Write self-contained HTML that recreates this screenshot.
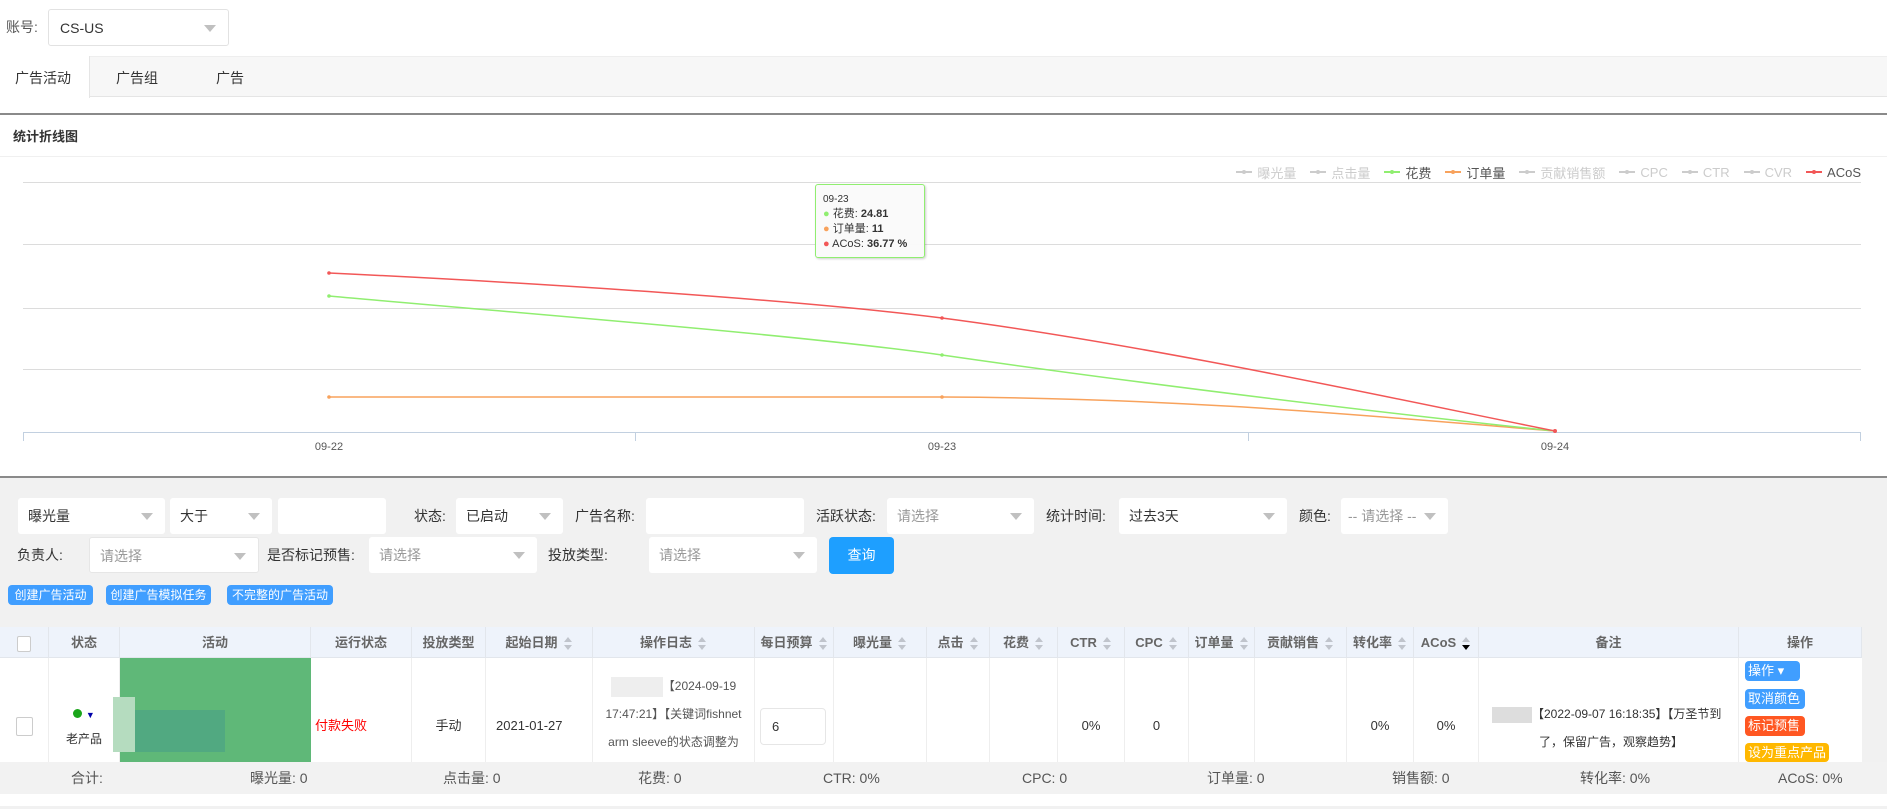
<!DOCTYPE html>
<html><head><meta charset="utf-8">
<style>
*{box-sizing:border-box;margin:0;padding:0}
body{width:1887px;height:809px;overflow:hidden;background:#fff;font-family:"Liberation Sans","Noto Sans CJK SC",sans-serif;color:#333;position:relative;font-size:14px}
.a{position:absolute}
.sel{position:absolute;background:#fff;border-radius:3px;height:36px;line-height:36px;padding-left:10px;font-size:14px;color:#333}
.sel.ph{color:#999}
.sel:after{content:"";position:absolute;right:12px;top:15px;border-left:6px solid transparent;border-right:6px solid transparent;border-top:7px solid #c0c0c0}
.lbl{position:absolute;font-size:14px;color:#333;line-height:36px}
.bb{position:absolute;background:#409eff;color:#fff;font-size:12px;border-radius:4px;height:20px;line-height:20px;text-align:center}
.th{position:absolute;top:627px;height:31px;line-height:31px;text-align:center;font-size:13px;color:#666;border-right:1px solid #e2e6ec;font-weight:bold}
.td{position:absolute;top:658px;height:136px;border-right:1px solid #eee;font-size:13px;color:#333;text-align:center;line-height:136px}
.sort{display:inline-block;width:9px;height:14px;vertical-align:middle;margin-left:6px;position:relative}
.sort:before{content:"";position:absolute;left:0;top:0;border-left:4.5px solid transparent;border-right:4.5px solid transparent;border-bottom:5px solid #c0c4cc}
.sort:after{content:"";position:absolute;left:0;top:8px;border-left:4.5px solid transparent;border-right:4.5px solid transparent;border-top:5px solid #c0c4cc}
.sort.d:after{border-top-color:#000}
.ft{position:absolute;top:762px;height:32px;line-height:32px;font-size:14px;color:#555}
.ob{position:absolute;left:1745px;color:#fff;font-size:13px;border-radius:4px;height:20px;line-height:20px;padding:0 3px}
.leg{display:inline-flex;align-items:center;margin-left:14px;font-size:13px;color:#ccc}
.leg i{display:inline-block;width:16px;height:2px;background:#ccc;margin-right:5px;position:relative}
.leg i:after{content:"";position:absolute;left:6px;top:-1.5px;width:4px;height:4px;border-radius:50%;background:inherit}
</style></head><body>
<div class="lbl" style="left:6px;top:9px;color:#555">账号:</div>
<div class="sel" style="left:48px;top:9px;width:181px;height:37px;border:1px solid #e2e2e2;padding-left:11px">CS-US</div>
<div class="a" style="left:0;top:56px;width:1887px;height:41px;background:#f7f7f7;border-top:1px solid #eee;border-bottom:1px solid #e5e5e5"></div>
<div class="a" style="left:0;top:56px;width:90px;height:42px;background:#fff;border-right:1px solid #e5e5e5"></div>
<div class="a" style="left:15px;top:68px;font-size:14px;color:#333">广告活动</div>
<div class="a" style="left:116px;top:68px;font-size:14px;color:#333">广告组</div>
<div class="a" style="left:216px;top:68px;font-size:14px;color:#333">广告</div>
<div class="a" style="left:0;top:113px;width:1887px;height:2px;background:#8a8a8a"></div>
<div class="a" style="left:13px;top:126px;font-size:13px;font-weight:bold;color:#333">统计折线图</div>
<div class="a" style="left:0;top:156px;width:1887px;height:1px;background:#f0f0f0"></div>
<svg class="a" style="left:0;top:157px" width="1887" height="318">
<g stroke="#dcdcdc" stroke-width="1">
<line x1="23" y1="25.5" x2="1861" y2="25.5"/>
<line x1="23" y1="87.5" x2="1861" y2="87.5"/>
<line x1="23" y1="151.5" x2="1861" y2="151.5"/>
<line x1="23" y1="212.5" x2="1861" y2="212.5"/>
</g>
<g stroke="#c2d0e0" stroke-width="1">
<line x1="23" y1="275.5" x2="1861" y2="275.5"/>
<line x1="23.5" y1="275" x2="23.5" y2="284"/>
<line x1="635.5" y1="275" x2="635.5" y2="284"/>
<line x1="1248.5" y1="275" x2="1248.5" y2="284"/>
<line x1="1860.5" y1="275" x2="1860.5" y2="284"/>
</g>
<g font-size="11" fill="#555" text-anchor="middle" font-family="Liberation Sans">
<text x="329" y="293">09-22</text><text x="942" y="293">09-23</text><text x="1555" y="293">09-24</text>
</g>
<g fill="none" stroke-width="1.5">
<path d="M329 240 L942 240 C1200 241 1400 262 1555 274" stroke="#f8a25c"/>
<path d="M329 139 C540 158 800 178 942 198 C1150 228 1400 258 1555 274" stroke="#90ee70"/>
<path d="M329 116 C540 126 800 143 942 161 C1150 188 1400 243 1555 274" stroke="#f25757"/>
</g>
<g><circle cx="329" cy="240" r="1.8" fill="#f8a25c"/><circle cx="942" cy="240" r="1.8" fill="#f8a25c"/>
<circle cx="329" cy="139" r="1.8" fill="#90ee70"/><circle cx="942" cy="198" r="1.8" fill="#90ee70"/>
<circle cx="329" cy="116" r="1.8" fill="#f25757"/><circle cx="942" cy="161" r="1.8" fill="#f25757"/><circle cx="1555" cy="274" r="2" fill="#f25757"/></g>
</svg>
<div class="a" style="right:26px;top:164px;height:16px;display:flex">
<span class="leg"><i></i>曝光量</span><span class="leg"><i></i>点击量</span>
<span class="leg" style="color:#555"><i style="background:#90ee70"></i>花费</span>
<span class="leg" style="color:#555"><i style="background:#f8a25c"></i>订单量</span>
<span class="leg"><i></i>贡献销售额</span><span class="leg"><i></i>CPC</span><span class="leg"><i></i>CTR</span><span class="leg"><i></i>CVR</span>
<span class="leg" style="color:#555"><i style="background:#f25757"></i>ACoS</span>
</div>
<div class="a" style="left:815px;top:184px;width:110px;height:74px;background:rgba(250,250,250,.95);border:1px solid #90ee70;border-radius:3px;box-shadow:1px 1px 2px rgba(0,0,0,.2);font-size:11px;color:#333;padding:7px 7px;line-height:15px">
<div style="font-size:10px">09-23</div>
<div><span style="color:#90ee70">●</span> 花费: <b>24.81</b></div>
<div><span style="color:#f8a25c">●</span> 订单量: <b>11</b></div>
<div><span style="color:#f25757">●</span> ACoS: <b>36.77 %</b></div>
</div>
<div class="a" style="left:0;top:476px;width:1887px;height:2px;background:#8a8a8a"></div>
<div class="a" style="left:0;top:478px;width:1887px;height:331px;background:#f1f1f1"></div>
<div class="sel" style="left:18px;top:498px;width:147px">曝光量</div>
<div class="sel" style="left:170px;top:498px;width:102px">大于</div>
<div class="a" style="left:278px;top:498px;width:108px;height:36px;background:#fff;border-radius:3px"></div>
<div class="lbl" style="left:414px;top:498px">状态:</div>
<div class="sel" style="left:456px;top:498px;width:107px">已启动</div>
<div class="lbl" style="left:575px;top:498px">广告名称:</div>
<div class="a" style="left:646px;top:498px;width:158px;height:36px;background:#fff;border-radius:3px"></div>
<div class="lbl" style="left:816px;top:498px">活跃状态:</div>
<div class="sel ph" style="left:887px;top:498px;width:147px">请选择</div>
<div class="lbl" style="left:1046px;top:498px">统计时间:</div>
<div class="sel" style="left:1119px;top:498px;width:168px">过去3天</div>
<div class="lbl" style="left:1299px;top:498px">颜色:</div>
<div class="sel ph" style="left:1341px;top:498px;width:107px;padding-left:7px">-- 请选择 --</div>
<div class="lbl" style="left:17px;top:537px">负责人:</div>
<div class="sel ph" style="left:89px;top:537px;width:170px;border:1px solid #e6e6e6">请选择</div>
<div class="lbl" style="left:267px;top:537px">是否标记预售:</div>
<div class="sel ph" style="left:369px;top:537px;width:168px">请选择</div>
<div class="lbl" style="left:548px;top:537px">投放类型:</div>
<div class="sel ph" style="left:649px;top:537px;width:168px">请选择</div>
<div class="a" style="left:829px;top:537px;width:65px;height:37px;background:#1e9fff;border-radius:4px;color:#fff;text-align:center;line-height:37px;font-size:14px">查询</div>
<div class="bb" style="left:8px;top:585px;width:85px">创建广告活动</div>
<div class="bb" style="left:106px;top:585px;width:105px">创建广告模拟任务</div>
<div class="bb" style="left:227px;top:585px;width:106px">不完整的广告活动</div>
<div class="a" style="left:0;top:627px;width:1862px;height:31px;background:#eef3fb;border-bottom:1px solid #e2e6ec"></div>
<div class="a" style="left:0;top:658px;width:1862px;height:104px;background:#fff"></div>
<div class="th" style="left:0;width:49px"><span style="display:inline-block;width:14px;height:16px;border:1px solid #ccc;border-radius:2px;background:#fff;vertical-align:middle"></span></div>
<div class="th" style="left:49px;width:71px">状态</div>
<div class="th" style="left:120px;width:191px">活动</div>
<div class="th" style="left:311px;width:101px">运行状态</div>
<div class="th" style="left:412px;width:74px">投放类型</div>
<div class="th" style="left:486px;width:107px">起始日期<span class="sort"></span></div>
<div class="th" style="left:593px;width:162px">操作日志<span class="sort"></span></div>
<div class="th" style="left:755px;width:79px">每日预算<span class="sort"></span></div>
<div class="th" style="left:834px;width:93px">曝光量<span class="sort"></span></div>
<div class="th" style="left:927px;width:63px">点击<span class="sort"></span></div>
<div class="th" style="left:990px;width:68px">花费<span class="sort"></span></div>
<div class="th" style="left:1058px;width:67px">CTR<span class="sort"></span></div>
<div class="th" style="left:1125px;width:64px">CPC<span class="sort"></span></div>
<div class="th" style="left:1189px;width:66px">订单量<span class="sort"></span></div>
<div class="th" style="left:1255px;width:92px">贡献销售<span class="sort"></span></div>
<div class="th" style="left:1347px;width:67px">转化率<span class="sort"></span></div>
<div class="th" style="left:1414px;width:65px">ACoS<span class="sort d"></span></div>
<div class="th" style="left:1479px;width:260px">备注</div>
<div class="th" style="left:1739px;width:123px">操作</div>
<div class="td" style="left:0;width:49px"><span style="display:inline-block;width:17px;height:19px;border:1px solid #ccc;border-radius:2px;vertical-align:middle"></span></div>
<div class="td" style="left:49px;width:71px;line-height:18px"><div style="margin-top:47px"><span style="display:inline-block;width:9px;height:9px;border-radius:50%;background:#1aa51a"></span> <span style="color:#00a;font-size:9px">▼</span></div><div style="font-size:12px;margin-top:6px">老产品</div></div>
<div class="td" style="left:120px;width:191px;background:#5fb878;border:none"></div>
<div class="a" style="left:113px;top:697px;width:22px;height:55px;background:#b5dcbf"></div>
<div class="a" style="left:135px;top:710px;width:90px;height:42px;background:#4ea583;opacity:.8"></div>
<div class="td" style="left:311px;width:101px;text-align:left;padding-left:4px;color:#f00">付款失败</div>
<div class="td" style="left:412px;width:74px">手动</div>
<div class="td" style="left:486px;width:107px;text-align:left;padding-left:10px">2021-01-27</div>
<div class="td" style="left:593px;width:162px;line-height:28px;font-size:12px;color:#555;padding-top:14px">
<div><span style="display:inline-block;width:52px;height:20px;background:#eee;vertical-align:middle"></span>【2024-09-19</div>
<div>17:47:21】【关键词fishnet</div><div>arm sleeve的状态调整为</div></div>
<div class="td" style="left:755px;width:79px"></div>
<div class="a" style="left:760px;top:708px;width:66px;height:37px;border:1px solid #e6e6e6;border-radius:4px;line-height:35px;padding-left:11px;font-size:13px">6</div>
<div class="td" style="left:834px;width:93px"></div>
<div class="td" style="left:927px;width:63px"></div>
<div class="td" style="left:990px;width:68px"></div>
<div class="td" style="left:1058px;width:67px">0%</div>
<div class="td" style="left:1125px;width:64px">0</div>
<div class="td" style="left:1189px;width:66px"></div>
<div class="td" style="left:1255px;width:92px"></div>
<div class="td" style="left:1347px;width:67px">0%</div>
<div class="td" style="left:1414px;width:65px">0%</div>
<div class="td" style="left:1479px;width:260px;text-align:left;line-height:28px;font-size:12px;padding:42px 0 0 13px">
<div><span style="display:inline-block;width:40px;height:16px;background:#ddd;vertical-align:middle"></span>【2022-09-07 16:18:35】【万圣节到</div>
<div style="padding-left:47px">了，保留广告，观察趋势】</div></div>
<div class="td" style="left:1739px;width:123px;border:none"></div>
<div class="ob" style="top:661px;background:#409eff;width:55px">操作 ▾</div>
<div class="ob" style="top:689px;background:#409eff;width:60px">取消颜色</div>
<div class="ob" style="top:716px;background:#ff5722;width:60px">标记预售</div>
<div class="ob" style="top:743px;background:#ffb800;width:84px;height:19px">设为重点产品</div>
<div class="a" style="left:0;top:762px;width:1887px;height:32px;background:#f2f2f2"></div>
<div class="a" style="left:0;top:794px;width:1887px;height:12px;background:#fff"></div>
<div class="ft" style="left:71px">合计:</div>
<div class="ft" style="left:250px">曝光量: 0</div>
<div class="ft" style="left:443px">点击量: 0</div>
<div class="ft" style="left:638px">花费: 0</div>
<div class="ft" style="left:823px">CTR: 0%</div>
<div class="ft" style="left:1022px">CPC: 0</div>
<div class="ft" style="left:1207px">订单量: 0</div>
<div class="ft" style="left:1392px">销售额: 0</div>
<div class="ft" style="left:1580px">转化率: 0%</div>
<div class="ft" style="left:1778px">ACoS: 0%</div>
</body></html>
